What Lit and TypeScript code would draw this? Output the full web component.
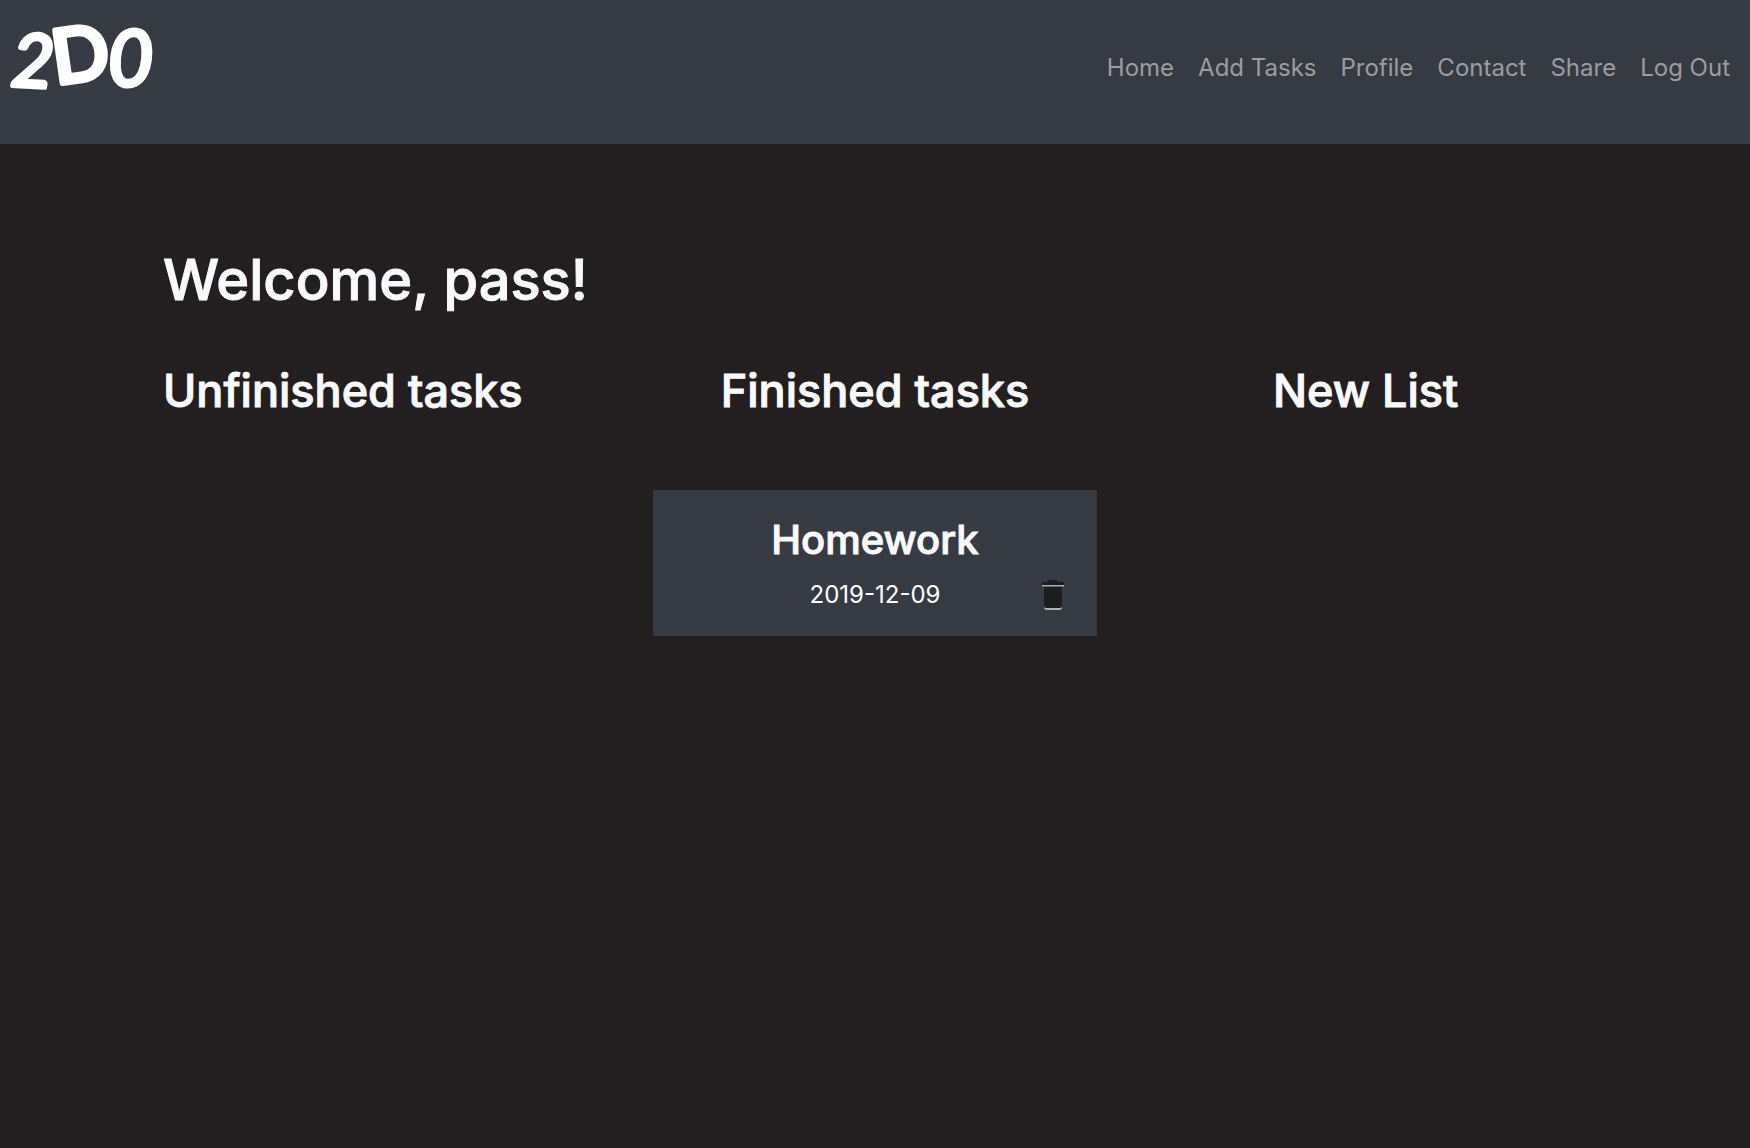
import { LitElement, html, css, svg } from "lit";
import { customElement, property } from "lit/decorators.js";

interface Task {
  name: string;
  date: string;
}

@customElement("site-header")
class SiteHeader extends LitElement {
  @property({ attribute: false }) links: string[] = [];

  static styles = css`
    :host {
      display: block;
    }
    .bar {
      box-sizing: border-box;
      min-height: 144px;
      padding: 0 20px 24px 0;
      display: flex;
      align-items: flex-start;
      justify-content: space-between;
      background: #363a42;
    }
    .brand {
      display: block;
    }
    .logo {
      display: block;
      width: 172px;
      height: 120px;
      overflow: visible;
      fill: #fff;
      stroke: #fff;
      stroke-linejoin: round;
      stroke-linecap: round;
      font-family: Lato, "Liberation Sans", sans-serif;
      font-weight: 400;
    }
    .links {
      display: flex;
      gap: 24px;
      margin: 0;
      padding: 48px 0 0;
      list-style: none;
    }
    .link {
      display: block;
      font-size: 24px;
      line-height: 40px;
      color: #9b9da1;
      text-decoration: none;
      white-space: nowrap;
    }
    .link:hover {
      color: #cdced0;
    }
  `;

  render() {
    return html`
      <header class="bar">
        <a class="brand" href="#home" aria-label="2DO">
          <svg class="logo" viewBox="0 0 172 120" aria-hidden="true">
            ${svg`
              <text x="10" y="86" font-size="74" font-style="italic" stroke-width="4" transform="rotate(3 12 86)">2</text>
              <text x="56" y="84" font-size="74" stroke-width="6" transform="rotate(-8 56 84)">D</text>
              <text x="108" y="86" font-size="78" font-style="italic" stroke-width="4">0</text>
            `}
          </svg>
        </a>
        <nav aria-label="Main">
          <ul class="links">
            ${this.links.map(
              (l) => html`<li><a class="link" href="#${l.toLowerCase().replace(" ", "-")}">${l}</a></li>`
            )}
          </ul>
        </nav>
      </header>
    `;
  }
}

@customElement("task-card")
class TaskCard extends LitElement {
  @property({ attribute: false }) task: Task = { name: "", date: "" };

  static styles = css`
    :host {
      display: block;
    }
    .card {
      padding: 24px 32px 20px;
      display: grid;
      grid-template-columns: 24px 1fr 24px;
      row-gap: 8px;
      align-items: center;
      background: #363a42;
      color: #f8f9fa;
      text-align: center;
    }
    .name {
      grid-column: 1 / -1;
      margin: 0;
      font-size: 40px;
      line-height: 52px;
      font-weight: 500;
      -webkit-text-stroke: 1px currentColor;
    }
    .date {
      grid-column: 2;
      margin: 0;
      font-size: 24px;
      line-height: 42px;
      color: #fff;
    }
    .remove {
      display: block;
      padding: 0;
      border: 0;
      background: none;
      cursor: pointer;
    }
    .bin {
      display: block;
      width: 24px;
      height: 32px;
    }
  `;

  render() {
    return html`
      <article class="card">
        <h3 class="name">${this.task.name}</h3>
        <p class="date">${this.task.date}</p>
        <button class="remove" type="button" aria-label="Delete ${this.task.name}">
          <svg class="bin" viewBox="0 0 24 32" aria-hidden="true">
            <path d="M3 27v1q0 3 3 3h12q3 0 3-3v-1z" fill="#b0b1b4" />
            <path d="M3 7h18v20q0 2-2 2H5q-2 0-2-2z" fill="#1c1d20" />
            <path d="M1 3h6q.5-2 2.500-2h5q2 0 2.500 2H23v3H1z" fill="#1c1d20" />
            <path d="M1 6h22v1.500H1z" fill="#b0b1b4" />
          </svg>
        </button>
      </article>
    `;
  }
}

@customElement("app-root")
class AppRoot extends LitElement {
  private links = ["Home", "Add Tasks", "Profile", "Contact", "Share", "Log Out"];
  private finished: Task[] = [{ name: "Homework", date: "2019-12-09" }];

  static styles = css`
    :host {
      display: block;
      min-height: 100vh;
      background: #231f20;
      color: #f8f9fa;
      font-family: Inter, "Liberation Sans", sans-serif;
    }
    .page {
      max-width: 1424px;
      margin: 0 auto;
      padding: 100px 24px 48px;
    }
    .welcome {
      margin: 0 0 46px;
      font-size: 56px;
      line-height: 72px;
      font-weight: 500;
      -webkit-text-stroke: 1px currentColor;
    }
    .lists {
      display: grid;
      grid-template-columns: repeat(3, 1fr);
    }
    .list {
      display: flex;
      flex-direction: column;
      gap: 70px;
    }
    .middle {
      align-items: center;
    }
    .last {
      align-items: center;
      padding-left: 32px;
    }
    .title {
      margin: 0;
      font-size: 45px;
      line-height: 58px;
      font-weight: 500;
      -webkit-text-stroke: 1px currentColor;
      white-space: nowrap;
    }
    .item {
      width: 100%;
      max-width: 444px;
    }
  `;

  render() {
    return html`
      <site-header .links=${this.links}></site-header>
      <main class="page">
        <h1 class="welcome">Welcome, pass!</h1>
        <div class="lists">
          <section class="list">
            <h2 class="title">Unfinished tasks</h2>
          </section>
          <section class="list middle">
            <h2 class="title">Finished tasks</h2>
            ${this.finished.map((t) => html`<task-card class="item" .task=${t}></task-card>`)}
          </section>
          <section class="list last">
            <h2 class="title">New List</h2>
          </section>
        </div>
      </main>
    `;
  }
}
